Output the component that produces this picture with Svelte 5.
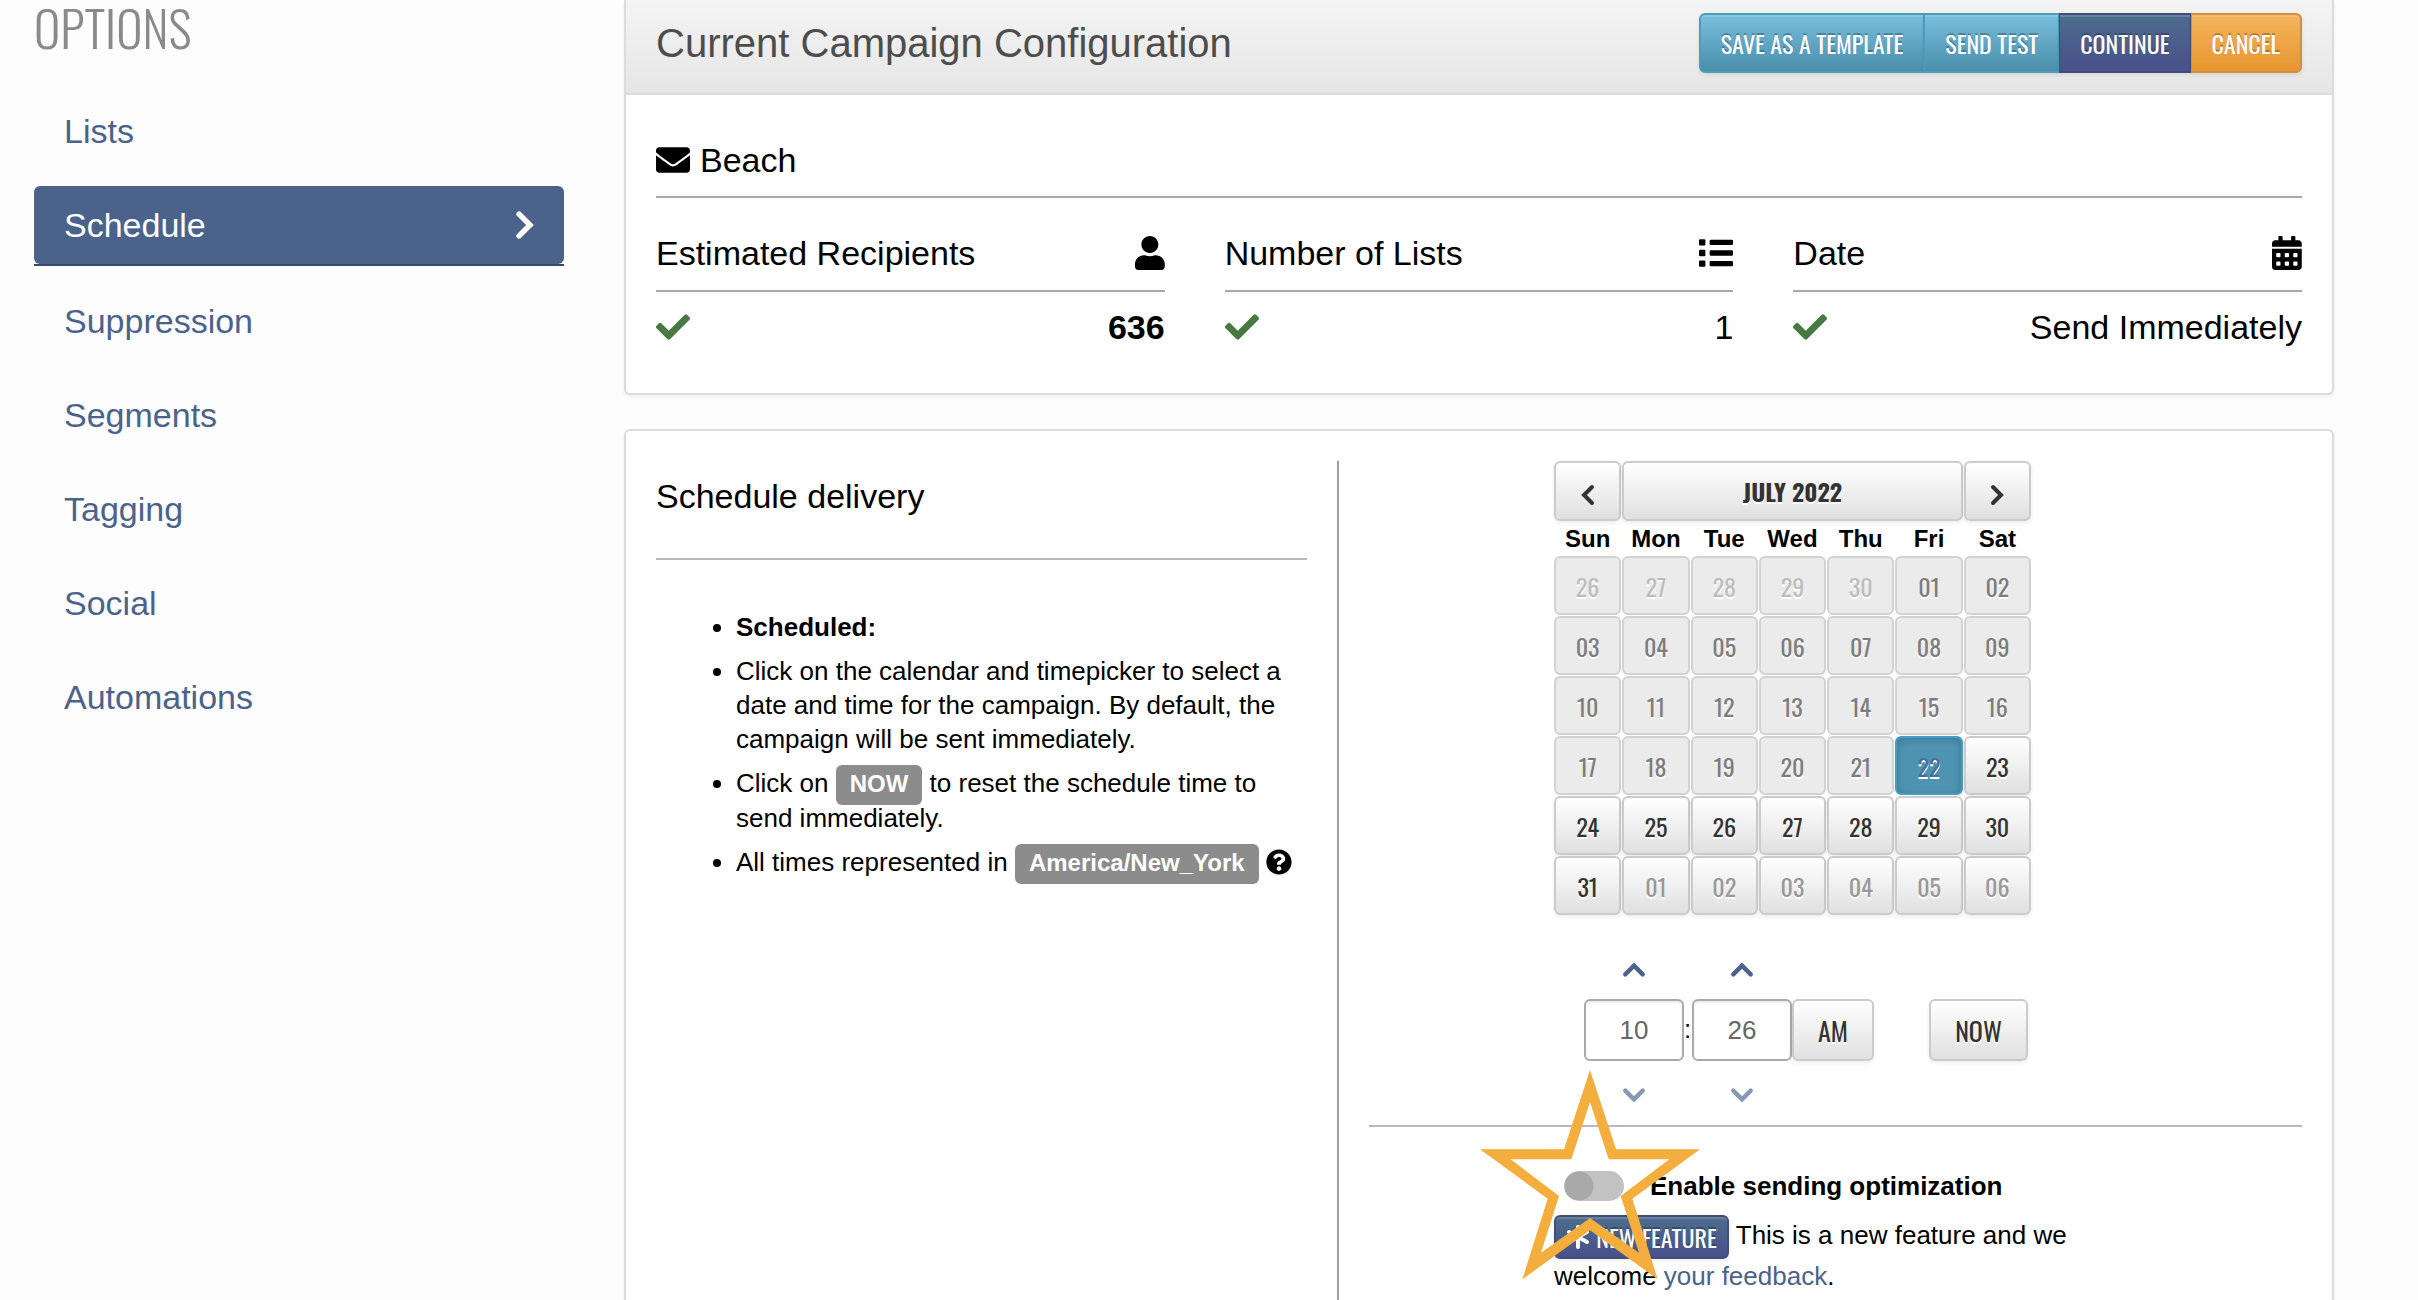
<script>
  const navItems = ['Lists', 'Schedule', 'Suppression', 'Segments', 'Tagging', 'Social', 'Automations'];
  let activeItem = $state('Schedule');

  const weekdays = ['Sun', 'Mon', 'Tue', 'Wed', 'Thu', 'Fri', 'Sat'];
  const today = 22;
  let selected = $state(22);

  let hour = $state('10');
  let minute = $state('26');
  let meridiem = $state('AM');
  let optimize = $state(false);

  const pad = (n) => String(n).padStart(2, '0');

  // six weeks, starting on Sunday June 26
  const weeks = Array.from({ length: 6 }, (_, w) =>
    Array.from({ length: 7 }, (_, d) => {
      const n = w * 7 + d - 4;
      if (n < 1) return { label: pad(n + 30), day: n, other: true, past: true };
      if (n > 31) return { label: pad(n - 31), day: n, other: true, past: false };
      return { label: pad(n), day: n, other: false, past: n < today };
    })
  );

  const stats = [
    { title: 'Estimated Recipients', icon: 'user', value: '636', bold: true },
    { title: 'Number of Lists', icon: 'list', value: '1' },
    { title: 'Date', icon: 'calendar', value: 'Send Immediately' }
  ];

  const icons = {
    envelope: {
      w: 512,
      d: 'M502.3 190.8c3.9-3.1 9.7-.2 9.7 4.7V400c0 26.5-21.5 48-48 48H48c-26.5 0-48-21.5-48-48V195.6c0-5 5.7-7.8 9.7-4.7 22.4 17.4 52.1 39.5 154.1 113.6 21.1 15.4 56.7 47.8 92.2 47.6 35.7.3 72-32.8 92.3-47.6 102-74.1 131.6-96.3 154-113.7zM256 320c23.2.4 56.6-29.2 73.4-41.4 132.7-96.3 142.8-104.7 173.4-128.7 5.8-4.5 9.2-11.5 9.2-18.9v-19c0-26.5-21.5-48-48-48H48c-26.5 0-48 21.5-48 48v19c0 7.4 3.4 14.3 9.2 18.9 30.6 23.9 40.7 32.4 173.4 128.7 16.8 12.2 50.2 41.8 73.4 41.4z'
    },
    user: {
      w: 448,
      d: 'M224 256c70.7 0 128-57.3 128-128S294.7 0 224 0 96 57.3 96 128s57.3 128 128 128zm89.6 32h-16.7c-22.2 10.2-46.9 16-72.9 16s-50.6-5.8-72.9-16h-16.7C60.2 288 0 348.2 0 422.4V464c0 26.5 21.5 48 48 48h352c26.5 0 48-21.5 48-48v-41.6c0-74.2-60.2-134.4-134.4-134.4z'
    },
    list: {
      w: 512,
      d: 'M80 368H16a16 16 0 0 0-16 16v64a16 16 0 0 0 16 16h64a16 16 0 0 0 16-16v-64a16 16 0 0 0-16-16zm0-320H16A16 16 0 0 0 0 64v64a16 16 0 0 0 16 16h64a16 16 0 0 0 16-16V64a16 16 0 0 0-16-16zm0 160H16a16 16 0 0 0-16 16v64a16 16 0 0 0 16 16h64a16 16 0 0 0 16-16v-64a16 16 0 0 0-16-16zm416 168H176a16 16 0 0 0-16 16v48a16 16 0 0 0 16 16h320a16 16 0 0 0 16-16v-48a16 16 0 0 0-16-16zm0-320H176a16 16 0 0 0-16 16v48a16 16 0 0 0 16 16h320a16 16 0 0 0 16-16V72a16 16 0 0 0-16-16zm0 160H176a16 16 0 0 0-16 16v48a16 16 0 0 0 16 16h320a16 16 0 0 0 16-16v-48a16 16 0 0 0-16-16z'
    },
    calendar: {
      w: 448,
      d: 'M0 464c0 26.500 21.500 48 48 48h352c26.500 0 48-21.500 48-48V192H0zM64 268q0-12 12-12h40q12 0 12 12v40q0 12-12 12H76q-12 0-12-12zM192 268q0-12 12-12h40q12 0 12 12v40q0 12-12 12h-40q-12 0-12-12zM320 268q0-12 12-12h40q12 0 12 12v40q0 12-12 12h-40q-12 0-12-12zM64 396q0-12 12-12h40q12 0 12 12v40q0 12-12 12H76q-12 0-12-12zM192 396q0-12 12-12h40q12 0 12 12v40q0 12-12 12h-40q-12 0-12-12zM320 396q0-12 12-12h40q12 0 12 12v40q0 12-12 12h-40q-12 0-12-12zM400 64h-48V16c0-8.800-7.200-16-16-16h-32c-8.800 0-16 7.200-16 16v48H160V16c0-8.800-7.200-16-16-16h-32c-8.800 0-16 7.200-16 16v48H48C21.500 64 0 85.500 0 112v48h448v-48c0-26.500-21.500-48-48-48z'
    },
    check: {
      w: 512,
      d: 'M173.898 439.404l-166.4-166.4c-9.997-9.997-9.997-26.206 0-36.204l36.203-36.204c9.997-9.998 26.207-9.998 36.204 0L192 312.69 432.095 72.596c9.997-9.997 26.207-9.997 36.204 0l36.203 36.204c9.997 9.997 9.997 26.206 0 36.204l-294.4 294.401c-9.998 9.997-26.207 9.997-36.204-.001z'
    },
    question: {
      w: 512,
      d: 'M504 256c0 136.997-111.043 248-248 248S8 392.997 8 256C8 119.083 119.043 8 256 8s248 111.083 248 248zM262.655 90c-54.497 0-89.255 22.957-116.549 63.758-3.536 5.286-2.353 12.415 2.715 16.258l34.699 26.31c5.205 3.947 12.621 3.008 16.665-2.122 17.864-22.658 30.113-35.797 57.303-35.797 20.429 0 45.698 13.148 45.698 32.958 0 14.976-12.363 22.667-32.534 33.976C247.128 238.528 216 254.941 216 296v4c0 6.627 5.373 12 12 12h56c6.627 0 12-5.373 12-12v-1.333c0-28.462 83.186-29.647 83.186-106.667 0-58.002-60.165-102-116.531-102zM256 338c-25.365 0-46 20.635-46 46 0 25.364 20.635 46 46 46s46-20.636 46-46c0-25.365-20.635-46-46-46z'
    }
  };

  const arrows = {
    left: { box: '0 0 14 22', points: '11,3 3,11 11,19' },
    right: { box: '0 0 14 22', points: '3,3 11,11 3,19' },
    up: { box: '0 0 22 14', points: '3,11 11,3 19,11' },
    down: { box: '0 0 22 14', points: '3,3 11,11 19,3' }
  };

  function step(value, by, max) {
    return pad((Number(value) + by + max) % max);
  }
</script>

{#snippet icon(name)}
  <svg class="icon {name}" viewBox="0 0 {icons[name].w} 512" aria-hidden="true">
    <path fill="currentColor" fill-rule="evenodd" d={icons[name].d} />
  </svg>
{/snippet}

{#snippet arrow(cls, dir)}
  <svg class={cls} viewBox={arrows[dir].box} aria-hidden="true">
    <polyline points={arrows[dir].points} fill="none" stroke="currentColor" stroke-width="4" stroke-linecap="round" />
  </svg>
{/snippet}

<div class="page">
  <aside>
    <h1>OPTIONS</h1>
    <nav>
      <ul>
        {#each navItems as item}
          <li class:active={item === activeItem}>
            <a href="#{item.toLowerCase()}" onclick={() => (activeItem = item)}>
              {item}
              {#if item === activeItem}
                {@render arrow('nav-arrow', 'right')}
              {/if}
            </a>
          </li>
        {/each}
      </ul>
    </nav>
  </aside>

  <main>
    <section class="panel summary">
      <header>
        <h2>Current Campaign Configuration</h2>
        <div class="btn-group">
          <button class="btn info" type="button">SAVE AS A TEMPLATE</button>
          <button class="btn info" type="button">SEND TEST</button>
          <button class="btn primary" type="button">CONTINUE</button>
          <button class="btn warning" type="button">CANCEL</button>
        </div>
      </header>
      <div class="summary-body">
        <h3 class="campaign">{@render icon('envelope')} Beach</h3>
        <div class="stats">
          {#each stats as stat}
            <div class="stat">
              <h3>{stat.title} {@render icon(stat.icon)}</h3>
              <div class="value">
                {@render icon('check')}
                <span class:bold={stat.bold}>{stat.value}</span>
              </div>
            </div>
          {/each}
        </div>
      </div>
    </section>

    <section class="panel schedule">
      <div class="help">
        <h3>Schedule delivery</h3>
        <ul>
          <li><strong>Scheduled:</strong></li>
          <li>
            Click on the calendar and timepicker to select a date and time for the campaign. By default,
            the campaign will be sent immediately.
          </li>
          <li>Click on <span class="label">NOW</span> to reset the schedule time to send immediately.</li>
          <li>
            All times represented in <span class="label">America/New_York</span>
            {@render icon('question')}
          </li>
        </ul>
      </div>

      <div class="picker">
        <div class="inset">
          <table>
            <thead>
              <tr>
                <th>
                  <button class="btn" type="button" aria-label="Previous month">
                    {@render arrow('month-arrow', 'left')}
                  </button>
                </th>
                <th colspan="5"><button class="btn month" type="button">JULY 2022</button></th>
                <th>
                  <button class="btn" type="button" aria-label="Next month">
                    {@render arrow('month-arrow', 'right')}
                  </button>
                </th>
              </tr>
              <tr class="weekdays">
                {#each weekdays as day}
                  <th>{day}</th>
                {/each}
              </tr>
            </thead>
            <tbody>
              {#each weeks as week}
                <tr>
                  {#each week as cell}
                    <td>
                      <button
                        class="btn day"
                        class:other={cell.other}
                        class:past={cell.past}
                        class:selected={cell.day === selected}
                        type="button"
                        disabled={cell.past}
                        onclick={() => (selected = cell.day)}>{cell.label}</button>
                    </td>
                  {/each}
                </tr>
              {/each}
            </tbody>
          </table>

          <div class="time">
            <button class="step hour" type="button" aria-label="Hour up" onclick={() => (hour = step(hour, 1, 12))}>
              {@render arrow('step-arrow', 'up')}
            </button>
            <button class="step minute" type="button" aria-label="Minute up" onclick={() => (minute = step(minute, 1, 60))}>
              {@render arrow('step-arrow', 'up')}
            </button>
            <input class="hour" type="text" aria-label="Hour" bind:value={hour} />
            <span class="colon">:</span>
            <input class="minute" type="text" aria-label="Minute" bind:value={minute} />
            <button class="btn meridiem" type="button" onclick={() => (meridiem = meridiem === 'AM' ? 'PM' : 'AM')}>{meridiem}</button>
            <button class="btn now" type="button">NOW</button>
            <button class="step down hour" type="button" aria-label="Hour down" onclick={() => (hour = step(hour, -1, 12))}>
              {@render arrow('step-arrow', 'down')}
            </button>
            <button class="step down minute" type="button" aria-label="Minute down" onclick={() => (minute = step(minute, -1, 60))}>
              {@render arrow('step-arrow', 'down')}
            </button>
          </div>
        </div>

        <hr />

        <div class="inset optimize">
          <div class="toggle-row">
            <input id="optimize" class="toggle" type="checkbox" bind:checked={optimize} />
            <label for="optimize">Enable sending optimization</label>
          </div>
          <p>
            <button class="btn primary feature" type="button">
              <svg viewBox="0 0 24 24" aria-hidden="true">
                <path d="M12 2v20M3 7l18 10M3 17L21 7" stroke="currentColor" stroke-width="4" stroke-linecap="round" />
              </svg>
              NEW FEATURE</button>
            This is a new feature and we welcome <a href="#feedback">your feedback</a>.
          </p>
          <svg class="star" viewBox="60 32 660 630" aria-hidden="true">
            <path
              fill="#f4ae3d"
              fill-rule="evenodd"
              d="M390 32L468 270H720L517 418L593 660L390 513L187 660L263 418L60 270H312ZM390 128L334 300H152L297 410L243 580L390 476L537 580L482 410L628 300H446Z"
            />
          </svg>
        </div>
      </div>
    </section>
  </main>
</div>

<style>
  :global(body) {
    background: #fdfdfd;
    color: #000;
    font-family: 'Helvetica Neue', 'Liberation Sans', Arial, sans-serif;
    font-size: 26px;
    line-height: 34px;
  }

  .page {
    --narrow: 'Oswald', 'Arial Narrow', 'Liberation Sans', sans-serif;
    --blue: #4b638b;
    display: grid;
    grid-template-columns: 530fr 1710fr;
    gap: 60px;
    min-height: 100vh;
    padding: 0 84px 0 34px;
    box-sizing: border-box;
  }

  h1, h2, h3, ul, p { margin: 0; padding: 0; font-weight: 400; }
  a { color: var(--blue); text-decoration: none; }

  .icon { height: 34px; flex: none; }

  /* sidebar */
  h1 {
    color: #8a8a8a;
    font-family: var(--narrow);
    font-size: 50px;
    font-weight: 300;
    line-height: 52px;
    margin-bottom: 40px;
  }

  nav ul { list-style: none; }
  nav li { margin-bottom: 16px; }
  nav li a {
    display: flex;
    justify-content: space-between;
    align-items: center;
    height: 78px;
    padding: 0 30px;
    border-radius: 6px;
    font-size: 34px;
  }
  nav li.active { border-bottom: 2px solid #3b4869; }
  nav li.active a { background: var(--blue); color: #fff; }
  .nav-arrow { height: 30px; }

  /* panels */
  main { display: flex; flex-direction: column; min-width: 0; }
  .panel {
    background: #fff;
    border: 2px solid #dcdcdc;
    box-shadow: 0 2px 4px rgba(0, 0, 0, .06);
  }

  .summary { border-top: 0; border-radius: 0 0 6px 6px; margin-bottom: 34px; }
  .summary header {
    display: flex;
    justify-content: space-between;
    align-items: center;
    height: 86px;
    padding: 0 30px 7px;
    background: linear-gradient(#f4f4f4, #e6e6e6);
    border-bottom: 2px solid #dcdcdc;
  }
  .summary header h2 { color: #4d4d4d; font-size: 40px; line-height: 44px; }

  .summary-body { padding: 45px 30px 46px; }
  h3 { font-size: 34px; line-height: 40px; }
  .campaign {
    display: flex;
    align-items: center;
    gap: 10px;
    padding-bottom: 16px;
    border-bottom: 2px solid #a9a9a9;
  }
  .stats { display: grid; grid-template-columns: repeat(3, 1fr); gap: 60px; margin-top: 35px; }
  .stat h3 {
    display: flex;
    justify-content: space-between;
    align-items: center;
    padding-bottom: 17px;
    border-bottom: 2px solid #a9a9a9;
  }
  .value {
    display: flex;
    justify-content: space-between;
    align-items: center;
    margin-top: 15px;
    font-size: 34px;
    line-height: 40px;
  }
  .check { color: #467a42; }
  .bold { font-weight: 700; }

  /* buttons */
  .btn {
    box-sizing: border-box;
    height: 60px;
    padding: 0 20px;
    border: 2px solid #cbcbcb;
    border-radius: 6px;
    background: linear-gradient(#fff, #e0e0e0);
    box-shadow: 0 2px 4px rgba(0, 0, 0, .08);
    color: #333;
    font-family: var(--narrow);
    font-size: 24px;
    text-shadow: 0 2px 0 #fff;
    cursor: pointer;
  }
  .info, .primary, .warning { color: #fff; text-shadow: 0 -2px 0 rgba(0, 0, 0, .25); }
  .info { background: linear-gradient(#77bfde, #4a8eab); border-color: #4c9dbc; }
  .primary { background: linear-gradient(#4d6d8d, #48508a); border-color: #3f5078; }
  .warning { background: linear-gradient(#f2b55c, #e99530); border-color: #cf8f3c; }
  .info, .primary, .warning { box-shadow: inset 0 2px 0 rgba(255, 255, 255, .15), 0 2px 4px rgba(0, 0, 0, .08); }

  .btn-group { display: flex; }
  .btn-group .btn { border-radius: 0; border-left-width: 1px; border-right-width: 1px; }
  .btn-group .btn:first-child { border-radius: 6px 0 0 6px; border-left-width: 2px; }
  .btn-group .btn:last-child { border-radius: 0 6px 6px 0; border-right-width: 2px; }

  /* schedule panel */
  .schedule {
    display: grid;
    grid-template-columns: 683fr 963fr;
    flex: 1;
    padding: 30px 30px 0;
    border-bottom: 0;
    border-radius: 6px 6px 0 0;
  }
  .help { padding-right: 30px; border-right: 2px solid #a0a0a0; }
  .help h3 { padding: 15px 0 42px; border-bottom: 2px solid #bababa; }
  .help ul { margin-top: 50px; padding-left: 80px; }
  .help li { margin-bottom: 10px; }
  .label {
    padding: 5px 14px 8px;
    border-radius: 6px;
    background: #8c8c8c;
    color: #fff;
    font-size: 24px;
    font-weight: 700;
  }
  .question { height: 26px; vertical-align: -4px; }

  .picker { padding-left: 30px; min-width: 0; }
  .inset { padding: 0 185px; }

  table { width: 479px; margin: -1px; border-spacing: 1px; table-layout: fixed; }
  th, td { padding: 0; }
  td { height: 59px; }
  table .btn { display: block; width: 100%; padding: 0; text-align: center; }
  .month { font-weight: 700; }
  .month-arrow { display: block; height: 22px; margin: 8px auto 0; }
  .weekdays th { height: 33px; font-size: 24px; line-height: 33px; }
  .day.btn { height: 59px; }
  .day.other { color: #999; }
  .day.past { background: #ebebeb; border-color: #d2d2d2; color: #7d7d7d; box-shadow: none; }
  .day.past.other { color: #bdbdbd; }
  .day.selected {
    background: #4f93b2;
    border-color: #429fc6;
    box-shadow: inset 0 2px 8px rgba(0, 0, 0, .18);
    color: #4b6f9d;
  }

  .time {
    display: grid;
    grid-template-columns: 100px 8px 100px 82px 154px;
    grid-template-rows: 58px 62px 64px;
    margin: 26px 0 0 30px;
  }
  .hour { grid-column: 1; }
  .colon { grid-column: 2; grid-row: 2; line-height: 60px; }
  .minute { grid-column: 3; }
  .meridiem { grid-column: 4; grid-row: 2; }
  .now { grid-column: 5; grid-row: 2; margin-left: 55px; }
  .time .btn { height: 62px; padding: 0; font-size: 26px; }
  .time input {
    grid-row: 2;
    box-sizing: border-box;
    min-width: 0;
    border: 2px solid #aaa;
    border-radius: 6px;
    background: #fff;
    box-shadow: inset 0 2px 2px rgba(0, 0, 0, .08);
    color: #666;
    font-family: inherit;
    font-size: 26px;
    text-align: center;
  }
  .step { grid-row: 1; padding: 0; border: 0; background: none; color: var(--blue); cursor: pointer; }
  .down { grid-row: 3; padding-top: 4px; opacity: .65; }
  .step-arrow { display: block; width: 24px; height: 16px; margin: 0 auto; }

  hr { margin: 0; border: 0; border-top: 2px solid #bababa; }

  .optimize { position: relative; padding-top: 42px; }
  .toggle-row { display: flex; align-items: center; gap: 26px; padding-left: 10px; font-weight: 700; }
  .toggle {
    appearance: none;
    width: 60px;
    height: 30px;
    margin: 0;
    border-radius: 15px;
    background: radial-gradient(circle at 15px 15px, #a9a9a9 14px, #c2c2c2 15px);
  }
  .toggle:checked { background: radial-gradient(circle at 45px 15px, #fff 14px, var(--blue) 15px); }
  .optimize p { margin-top: 12px; line-height: 41px; }
  .btn.feature {
    display: inline-flex;
    align-items: center;
    justify-content: center;
    gap: 6px;
    width: 175px;
    height: 44px;
    margin: -3px 0;
    padding: 0;
    vertical-align: middle;
  }
  .feature svg { width: 24px; height: 24px; }

  /* highlight marker over the toggle */
  .star { position: absolute; left: 111px; top: -57px; width: 220px; height: 210px; pointer-events: none; }
</style>
